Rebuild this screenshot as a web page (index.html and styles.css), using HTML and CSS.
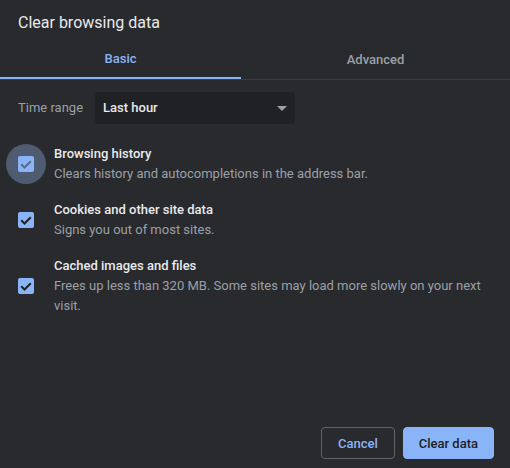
FILE: index.html
```html
<!DOCTYPE html>
<html>
<head>
<meta charset="utf-8">
<link rel="stylesheet" href="styles.css">
</head>
<body>
<div class="dialog">
  <div class="title">Clear browsing data</div>
  <div class="tabs">
    <div class="tab tab-active">Basic</div>
    <div class="tab">Advanced</div>
  </div>
  <div class="range">
    <span class="range-label">Time range</span>
    <div class="select">
      <span>Last hour</span>
      <svg class="arrow" width="10" height="5" viewBox="0 0 10 5"><path d="M0 0h10L5 5z" fill="#9aa0a6"/></svg>
    </div>
  </div>
  <div class="options">
    <div class="option">
      <div class="box-wrap">
        <span class="ripple"></span>
        <span class="box"><svg width="16" height="16" viewBox="0 0 16 16"><path d="M3.2 8.2l3.3 3.3L12.8 5.2" fill="none" stroke="#5d6c83" stroke-width="2"/></svg></span>
      </div>
      <div class="opt-text">
        <div class="opt-title">Browsing history</div>
        <div class="opt-sub">Clears history and autocompletions in the address bar.</div>
      </div>
    </div>
    <div class="option">
      <div class="box-wrap">
        <span class="box"><svg width="16" height="16" viewBox="0 0 16 16"><path d="M3.2 8.2l3.3 3.3L12.8 5.2" fill="none" stroke="#202124" stroke-width="2"/></svg></span>
      </div>
      <div class="opt-text">
        <div class="opt-title">Cookies and other site data</div>
        <div class="opt-sub">Signs you out of most sites.</div>
      </div>
    </div>
    <div class="option">
      <div class="box-wrap">
        <span class="box"><svg width="16" height="16" viewBox="0 0 16 16"><path d="M3.2 8.2l3.3 3.3L12.8 5.2" fill="none" stroke="#202124" stroke-width="2"/></svg></span>
      </div>
      <div class="opt-text">
        <div class="opt-title">Cached images and files</div>
        <div class="opt-sub">Frees up less than 320 MB. Some sites may load more slowly on your next visit.</div>
      </div>
    </div>
  </div>
  <div class="actions">
    <button class="btn btn-cancel">Cancel</button>
    <button class="btn btn-primary">Clear data</button>
  </div>
</div>
</body>
</html>
```
FILE: styles.css
```css
* { box-sizing: border-box; }
html, body {
  margin: 0;
  padding: 0;
  background: #292a2d;
}
body {
  font-family: Roboto, "Liberation Sans", sans-serif;
  font-size: 13px;
  line-height: 20px;
  color: #e8eaed;
}
.dialog {
  width: 510px;
  height: 468px;
  display: flex;
  flex-direction: column;
}
.title {
  font-size: 16px;
  line-height: 20px;
  padding: 13px 18px 7px;
  color: #e8eaed;
}
.tabs {
  display: flex;
  border-bottom: 1px solid #3c3d40;
  height: 40px;
}
.tab {
  flex: 1;
  display: flex;
  align-items: center;
  justify-content: center;
  font-weight: 500;
  color: #9aa0a6;
}
.tab-active {
  flex: 0 0 241px;
  color: #8ab4f8;
  border-bottom: 2px solid #8ab4f8;
}
.range {
  display: flex;
  align-items: center;
  padding: 12px 18px 0;
}
.range-label {
  color: #9aa0a6;
  width: 77px;
}
.select {
  width: 200px;
  height: 32px;
  background: #202124;
  border-radius: 4px;
  display: flex;
  align-items: center;
  justify-content: space-between;
  padding: 0 8px;
  font-weight: 500;
  color: #e8eaed;
}
.arrow { display: block; }
.options {
  padding-top: 12px;
}
.option {
  display: flex;
  align-items: center;
  padding: 8px 15px 8px 18px;
}
.box-wrap {
  position: relative;
  width: 16px;
  height: 16px;
  margin-right: 20px;
  flex: none;
}
.ripple {
  position: absolute;
  left: -12px;
  top: -12px;
  width: 40px;
  height: 40px;
  border-radius: 50%;
  background: #4e5b71;
}
.box {
  position: relative;
  display: block;
  width: 16px;
  height: 16px;
  border-radius: 2px;
  background: #8ab4f8;
}
.box svg { display: block; }
.opt-title {
  font-weight: 500;
  color: #e8eaed;
}
.opt-sub {
  color: #9aa0a6;
}
.actions {
  margin-top: auto;
  display: flex;
  justify-content: flex-end;
  gap: 8px;
  padding: 0 16px 9px;
}
.btn {
  height: 32px;
  padding: 0 16px;
  border-radius: 4px;
  font-family: Roboto, "Liberation Sans", sans-serif;
  font-size: 13px;
  font-weight: 500;
  cursor: pointer;
}
.btn-cancel {
  background: transparent;
  border: 1px solid #5f6368;
  color: #8ab4f8;
}
.btn-primary {
  padding: 0 15px;
  background: #8ab4f8;
  border: 1px solid #8ab4f8;
  color: #202124;
}
```
